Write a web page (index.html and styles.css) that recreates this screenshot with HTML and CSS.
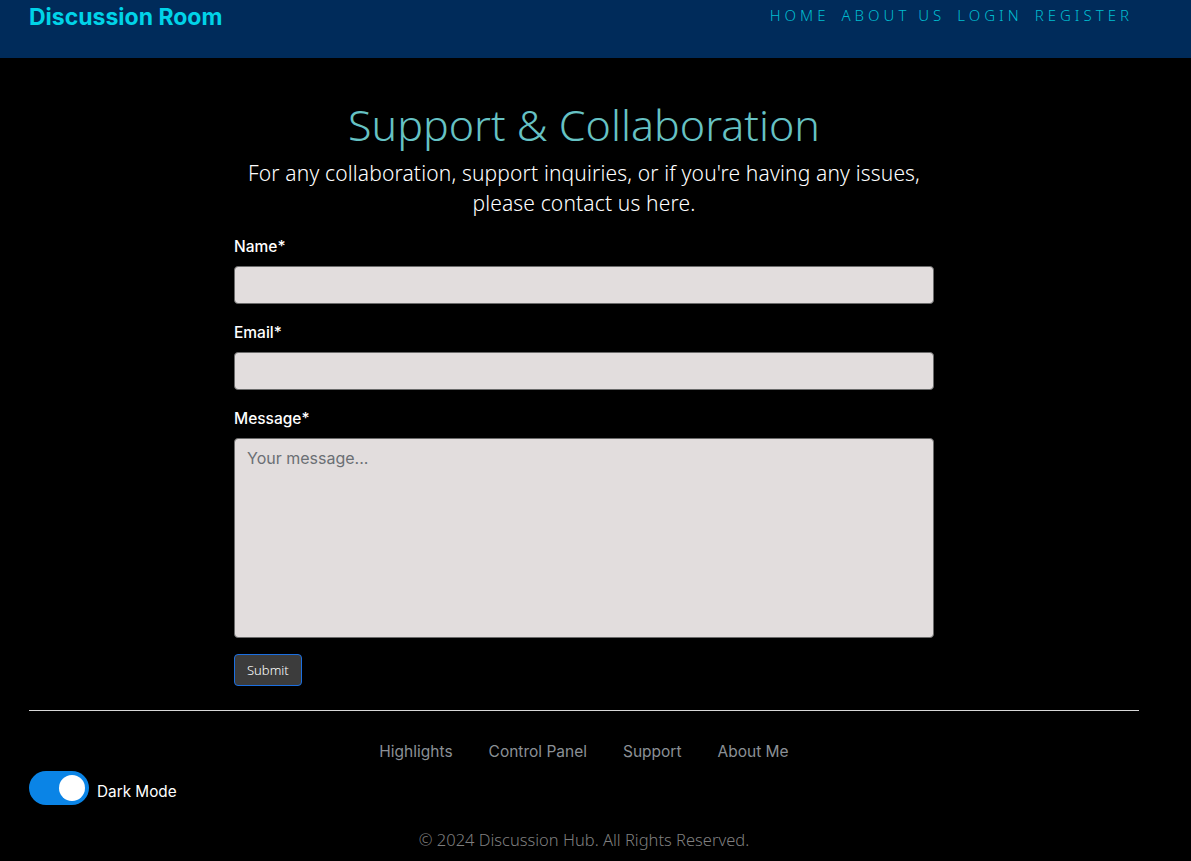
FILE: index.html
```html
<!DOCTYPE html>
<html lang="en">
<head>
<meta charset="utf-8">
<title>Discussion Room - Support</title>
<link rel="stylesheet" href="styles.css">
</head>
<body>
<header class="topbar">
  <a class="brand" href="#">Discussion Room</a>
  <nav class="mainnav">
    <a href="#">HOME</a>
    <a href="#">ABOUT US</a>
    <a href="#">LOGIN</a>
    <a href="#">REGISTER</a>
  </nav>
</header>
<main class="page">
  <section class="support">
    <h1 class="title">Support &amp; Collaboration</h1>
    <p class="intro">For any collaboration, support inquiries, or if you're having any issues,<br>please contact us here.</p>
    <form class="form">
      <label class="label" for="name">Name*</label>
      <input class="field" id="name" type="text">
      <label class="label" for="email">Email*</label>
      <input class="field" id="email" type="email">
      <label class="label" for="msg">Message*</label>
      <textarea class="field area" id="msg" placeholder="Your message..."></textarea>
      <div class="actions"><button class="submit" type="button">Submit</button></div>
    </form>
  </section>
  <hr class="rule">
  <footer class="footer">
    <nav class="footnav">
      <a href="#">Highlights</a>
      <a href="#">Control Panel</a>
      <a href="#">Support</a>
      <a href="#">About Me</a>
    </nav>
    <div class="mode">
      <span class="switch"><span class="knob"></span></span>
      <span class="mode-label">Dark Mode</span>
    </div>
    <p class="copy">© 2024 Discussion Hub. All Rights Reserved.</p>
  </footer>
</main>
</body>
</html>
```
FILE: styles.css
```css
* { box-sizing: border-box; }
html, body { margin: 0; padding: 0; }
body {
  background: #000;
  color: #fff;
  font-family: Inter, "Noto Sans", sans-serif;
  height: 861px;
  overflow: hidden;
}
a { text-decoration: none; }

.topbar {
  background: #002b5a;
  height: 58px;
  display: flex;
  justify-content: space-between;
  align-items: flex-start;
  padding: 0 58px 0 29px;
}
.brand {
  color: #00d3e8;
  font-family: Inter, sans-serif;
  font-weight: 700;
  font-size: 23px;
  line-height: 34px;
}
.mainnav {
  display: flex;
  gap: 12px;
  padding-top: 4px;
}
.mainnav a {
  color: #00bdd0;
  font-family: "Noto Sans", sans-serif;
  font-weight: 300;
  font-size: 15px;
  letter-spacing: 4px;
  line-height: 22px;
}

.page {
  width: 1110px;
  margin-left: 29px;
}
.support {
  width: 700px;
  margin: 0 auto;
  padding-top: 39px;
}
.title {
  margin: 0;
  text-align: center;
  color: #66c2c4;
  font-family: "Noto Sans", sans-serif;
  font-weight: 300;
  font-size: 43px;
  line-height: 56px;
}
.intro {
  margin: 5px 0 0;
  text-align: center;
  font-family: "Noto Sans", sans-serif;
  font-weight: 300;
  font-size: 21px;
  letter-spacing: 0.15px;
  line-height: 30px;
  color: #fff;
}
.form {
  display: flex;
  flex-direction: column;
  margin-top: 16px;
}
.label {
  font-family: Inter, sans-serif;
  font-weight: 500;
  font-size: 15.5px;
  line-height: 24px;
  padding-top: 1px;
  margin-bottom: 7px;
}
.field {
  display: block;
  width: 100%;
  height: 38px;
  background: #e2dddd;
  border: 1px solid #6b6b6b;
  border-radius: 4px;
  margin-bottom: 16px;
  font-family: Inter, sans-serif;
  font-size: 16px;
  padding: 6px 12px;
}
.area {
  height: 200px;
  resize: none;
  padding: 7px 12px;
  line-height: 24px;
}
.area::placeholder { color: #6b6f74; }
.actions { display: flex; }
.submit {
  background: #3c3c3c;
  color: #fff;
  border: 1px solid #1c6fe0;
  border-radius: 4px;
  height: 32px;
  padding: 0 12px;
  font-family: "Noto Sans", sans-serif;
  font-weight: 300;
  font-size: 13px;
}

.rule {
  border: 0;
  border-top: 1px solid #d8d8d8;
  margin: 24px 0 0;
}
.footer {
  padding-top: 29px;
}
.footnav {
  display: flex;
  justify-content: center;
  gap: 36px;
}
.footnav a {
  color: #8b9096;
  font-family: Inter, sans-serif;
  font-size: 15.5px;
  line-height: 24px;
}
.mode {
  display: flex;
  align-items: center;
  gap: 8px;
  margin-top: 7px;
}
.switch {
  width: 60px;
  height: 34px;
  background: #0a84e6;
  border-radius: 17px;
  display: flex;
  align-items: center;
  justify-content: flex-end;
  padding-right: 4px;
}
.knob {
  width: 26px;
  height: 26px;
  background: #fff;
  border-radius: 50%;
}
.mode-label {
  font-family: Inter, sans-serif;
  font-size: 15.3px;
  padding-top: 6px;
}
.copy {
  margin: 23px 0 0;
  text-align: center;
  color: #7f7f7f;
  font-family: "Noto Sans", sans-serif;
  font-weight: 300;
  font-size: 16.5px;
  line-height: 24px;
}
```
